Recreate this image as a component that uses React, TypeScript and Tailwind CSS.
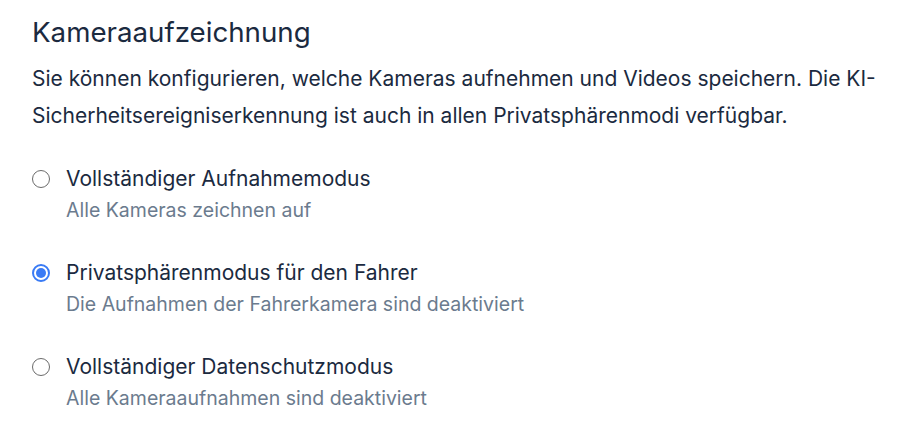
import React from "react";

const options = [
  { title: "Vollständiger Aufnahmemodus", sub: "Alle Kameras zeichnen auf", checked: false },
  { title: "Privatsphärenmodus für den Fahrer", sub: "Die Aufnahmen der Fahrerkamera sind deaktiviert", checked: true },
  { title: "Vollständiger Datenschutzmodus", sub: "Alle Kameraaufnahmen sind deaktiviert", checked: false },
];

export default function App() {
  return (
    <div className="w-[910px] h-[436px] bg-white pl-8 pr-6 pt-[14px]" style={{ fontFamily: "Inter, 'Noto Sans', sans-serif" }}>
      <h1 className="text-[27.7px] leading-[36px] text-[#1b2a40] font-normal">Kameraaufzeichnung</h1>
      <p className="mt-[10px] text-[21px] leading-[37px] text-[#1b2a40]">
        Sie können konfigurieren, welche Kameras aufnehmen und Videos speichern. Die KI-Sicherheitsereigniserkennung ist auch in allen Privatsphärenmodi verfügbar.
      </p>
      <div className="mt-[31px] flex flex-col gap-[37px]">
        {options.map((o) => (
          <label key={o.title} className="flex items-start gap-4">
            <span className="mt-[5px] w-[18px] h-[18px] shrink-0 flex items-center justify-center">
              {o.checked ? (
                <span className="w-[18px] h-[18px] rounded-full border-2 border-[#3a7bf5] flex items-center justify-center">
                  <span className="w-[10px] h-[10px] rounded-full bg-[#3a7bf5]" />
                </span>
              ) : (
                <span className="w-[18px] h-[18px] rounded-full border-[1.5px] border-[#6b6b6b]" />
              )}
            </span>
            <span className="flex flex-col">
              <span className="text-[21px] leading-[28px] text-[#1b2a40]">{o.title}</span>
              <span className="mt-[5px] text-[19.5px] leading-[24px] text-[#6b7b8e]">{o.sub}</span>
            </span>
          </label>
        ))}
      </div>
    </div>
  );
}
